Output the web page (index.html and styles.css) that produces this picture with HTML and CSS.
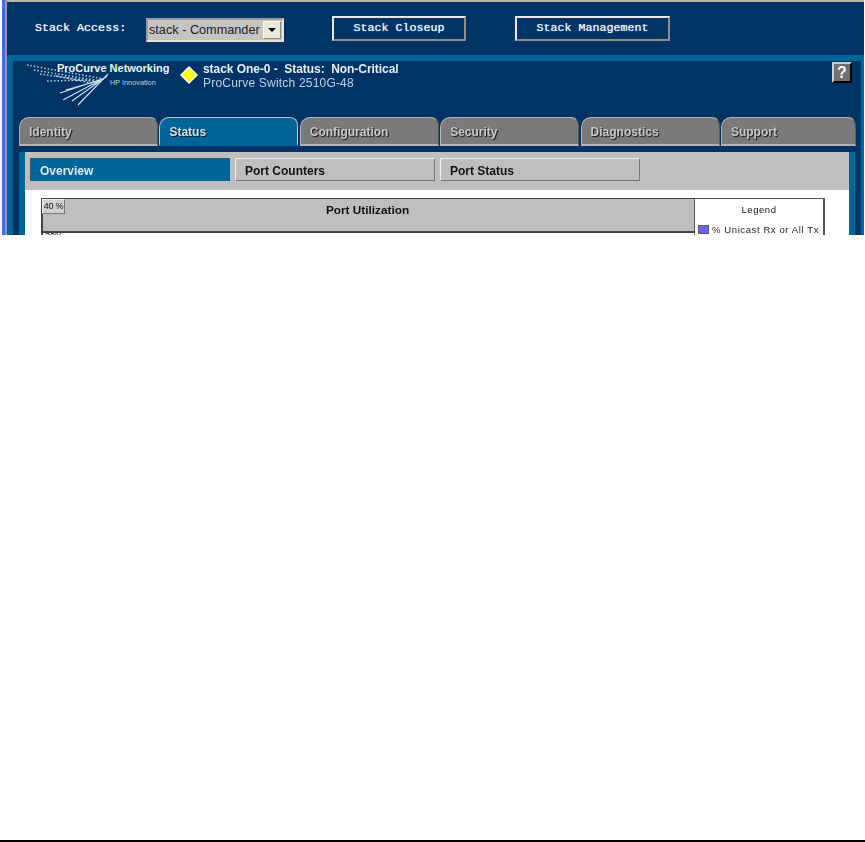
FILE: index.html
```html
<!DOCTYPE html>
<html lang="en">
<head>
<meta charset="utf-8">
<title>ProCurve Switch 2510G-48</title>
<link rel="stylesheet" href="styles.css">
</head>
<body>
<div class="shot">
  <div class="window">
    <div class="stackbar">
      <span class="stack-label">Stack Access:</span>
      <div class="select"><span class="select-value">stack - Commander</span><span class="select-arrow"><i></i></span></div>
      <div class="stack-btn closeup">Stack Closeup</div>
      <div class="stack-btn manage">Stack Management</div>
    </div>
    <div class="panel">
      <div class="inner">
        <div class="device">
          <svg class="logo" width="146" height="46" viewBox="27 60 146 46">
            <g class="rays">
              <path d="M108 74 78 105M107 76 72 101M106 77 63 100M105 78 60 93M104 79 66 90"/>
            </g>
            <g class="dots">
              <path d="M27 65 104 79M34 70 100 81M40 74 98 82M47 81 92 80M56 76 96 84"/>
            </g>
            <text class="logo-name" x="57" y="72">ProCurve Networking</text>
            <text class="logo-sub" x="110" y="85">HP Innovation</text>
          </svg>
          <svg class="diamond" width="18" height="18" viewBox="0 0 18 18"><path d="M9 1 17 9 9 17 1 9Z"/></svg>
          <div class="device-text">
            <div class="device-title">stack One-0 -&nbsp; Status:&nbsp; Non-Critical</div>
            <div class="device-model">ProCurve Switch 2510G-48</div>
          </div>
          <div class="help">?</div>
        </div>
        <div class="tabs">
          <div class="tab">Identity</div>
          <div class="tab active">Status</div>
          <div class="tab">Configuration</div>
          <div class="tab">Security</div>
          <div class="tab">Diagnostics</div>
          <div class="tab last">Support</div>
        </div>
        <div class="tab-gap"></div>
        <div class="content">
          <div class="subtabs">
            <div class="subtab on">Overview</div>
            <div class="subtab">Port Counters</div>
            <div class="subtab">Port Status</div>
          </div>
          <div class="page">
            <div class="chart">
              <div class="chart-main">
                <div class="chart-head">
                  <div class="scale">40 %</div>
                  <div class="chart-title">Port Utilization</div>
                </div>
                <div class="chart-next">30%</div>
              </div>
              <div class="legend">
                <div class="legend-title">Legend</div>
                <div class="legend-item"><span class="swatch"></span>% Unicast Rx or All Tx</div>
              </div>
            </div>
          </div>
        </div>
      </div>
    </div>
  </div>
</div>
<div class="rule"></div>
</body>
</html>
```
FILE: styles.css
```css
* { box-sizing: border-box; }
html, body { margin: 0; padding: 0; background: #fff; }
body { width: 865px; height: 842px; display: flex; flex-direction: column; font-family: "Liberation Sans", Arial, sans-serif; overflow: hidden; }

.shot { height: 235px; overflow: hidden; padding: 0 1px 0 2px; flex: none; filter: blur(0.35px); }
.window { height: 100%; border-left: 3px solid #3b6fe6; position: relative; }
.window > * { margin-left: 2px; }
.window::before { content: ""; display: block; height: 2px; background: #b8b4a6; }
.window::after { content: ""; position: absolute; left: 0; top: 0; bottom: 0; width: 2px; background: #9a978c; }

.stackbar { height: 53px; background: #003366; display: flex; align-items: flex-start; padding: 14px 0 0 28px; }
.stack-label { font: 11.7px/1 "Liberation Mono", monospace; color: #f0f5fa; text-shadow: 0 0 1px #c8d8e8; margin-top: 7px; width: 111px; flex: none; }
.select { width: 138px; height: 24px; margin-top: 2px; background: #c4c4c4; border: 2px solid #e4e4dc; border-top-color: #9c9c96; border-left-color: #9c9c96; display: flex; align-items: center; flex: none; }
.select-value { flex: 1; font-size: 12.7px; padding-left: 1px; color: #22222a; white-space: nowrap; }
.select-arrow { width: 18px; height: 18px; background: #ece9d8; border: 1px solid #fff; border-right-color: #888; border-bottom-color: #888; display: flex; align-items: center; justify-content: center; margin-right: 1px; flex: none; }
.select-arrow i { border-style: solid; border-width: 4px 4px 0; border-color: #000 transparent transparent; }
.stack-btn { height: 25px; border: 2px solid #e8e8e8; border-right-color: #8e8e88; border-bottom-color: #8e8e88; font: 11.7px/21px "Liberation Mono", monospace; color: #f0f5fa; text-shadow: 0 0 1px #c8d8e8; text-align: center; background: #003366; flex: none; }
.closeup { width: 134px; margin-left: 48px; }
.manage { width: 155px; margin-left: 49px; }

.panel { height: 180px; background: #006699; padding: 6px 3px 0 6px; }
.inner { background: #003366; padding: 0 6px; height: 100%; }
.device { height: 56px; display: flex; align-items: flex-start; margin-left: -6px; padding-left: 14px; }
.logo { flex: none; margin-top: -1px; display: block; }
.rays path { fill: none; stroke: #d4dee8; stroke-width: 1.1; }
.dots path { fill: none; stroke: #c0cede; stroke-width: 1.5; stroke-dasharray: 1.5 2; }
.logo-name { font: bold 11px "Liberation Sans", sans-serif; fill: #eef3f8; }
.logo-sub { font: 7.3px "Liberation Sans", sans-serif; fill: #c0cede; }
.diamond { flex: none; margin: 5px 0 0 7px; }
.diamond path { fill: #ffff00; stroke: #fff; stroke-width: 1.5; stroke-linejoin: round; }
.device-text { margin: 1px 0 0 5px; flex: 1; line-height: 14px; font-size: 12px; color: #e8eef4; }
.device-title { font-weight: bold; letter-spacing: -0.05px; }
.device-model { letter-spacing: 0.2px; color: #c4d2e0; }
.help { width: 20px; height: 21px; margin: 1px 3px 0 0; background: #707070; border: 2px solid #d0d0d0; border-right-color: #000; border-bottom-color: #000; color: #fff; font: bold 16px/17px "Liberation Sans", sans-serif; text-align: center; flex: none; }

.tabs { height: 29px; display: flex; gap: 1.4px; }
.tab { width: 139px; flex: none; background: #7a7a7a; border: 1px solid #b4b4b4; border-bottom-width: 2px; border-right-color: #555; border-radius: 10px 8px 0 0; padding: 0 0 0 9px; font-size: 12px; font-weight: bold; line-height: 28px; color: #c8c8c8; text-shadow: 1px 1px 1px #111; }
.tab.active { background: #006699; color: #d6e2ea; border-color: #b4c4cf; border-bottom-color: #006699; }
.tab.last { width: 135px; }
.tab-gap { height: 6px; }

.content { background: #006699; padding: 0 6px; height: 83px; }
.subtabs { background: #bebebe; height: 38px; padding: 6px 0 0 5px; display: flex; gap: 5px; }
.subtab { width: 200px; height: 23px; border: 1px solid #777; border-top-color: #eee; border-left-color: #eee; background: #bebebe; color: #111; font-size: 12px; font-weight: bold; line-height: 25px; padding-left: 9px; }
.subtab.on { background: #006699; color: #dfe9f0; border-color: #006699; border-left-color: #33556f; border-top-color: #33556f; }
.page { background: #fff; padding: 8px 25px 0 16px; height: 60px; }
.chart { display: flex; height: 60px; width: 784px; }
.chart-main { flex: 1; position: relative; }
.chart-head { height: 35px; background: #bebebe; border: 1px solid #444; border-width: 1px 0 2px 2px; text-align: center; }
.scale { position: absolute; left: 1px; top: 1px; width: 23px; height: 15px; background: #d2d2d2; border: 1px solid #777; border-top-color: #eee; border-left-color: #eee; font-size: 9px; letter-spacing: -0.2px; line-height: 13px; text-align: center; color: #111; }
.chart-title { font-size: 11.8px; font-weight: bold; line-height: 22px; color: #111; margin-left: -2px; }
.chart-next { font-size: 9px; line-height: 6px; color: #111; padding-left: 2px; border-left: 2px solid #444; }
.legend { width: 131px; flex: none; border: 1px solid #555; border-top-width: 1px; border-right-width: 2px; background: #fff; }
.legend-title { font-size: 9.5px; letter-spacing: 0.55px; text-align: center; padding-top: 5px; height: 24px; line-height: 12px; color: #111; }
.legend-item { font-size: 9.5px; letter-spacing: 0.6px; color: #222; display: flex; align-items: center; padding-left: 3px; height: 12px; white-space: nowrap; }
.swatch { width: 11px; height: 9px; background: #6666ff; border: 1px solid #555; margin-right: 3px; flex: none; }

.rule { height: 2px; background: #000; margin-top: auto; flex: none; }
```
